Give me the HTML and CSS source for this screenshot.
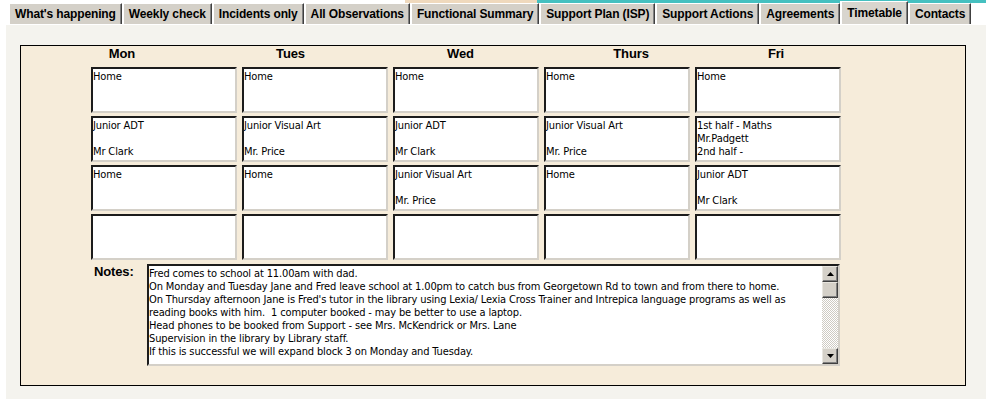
FILE: index.html
```html
<!DOCTYPE html>
<html lang="en">
<head>
  <meta charset="UTF-8" />
  <title>Timetable</title>
  <link rel="stylesheet" href="styles.css">
</head>
<body>

  <div class="tabbar">
    <div class="tab">What's happening</div>
    <div class="tab">Weekly check</div>
    <div class="tab">Incidents only</div>
    <div class="tab">All Observations</div>
    <div class="tab">Functional Summary</div>
    <div class="tab">Support Plan (ISP)</div>
    <div class="tab">Support Actions</div>
    <div class="tab">Agreements</div>
    <div class="tab active">Timetable</div>
    <div class="tab">Contacts</div>
  </div>

  <div class="content">
    <div class="panel">
      <div class="days">
        <div>Mon</div><div>Tues</div><div>Wed</div><div>Thurs</div><div>Fri</div>
      </div>

      <div class="grid">
        <div class="cell">Home</div>
        <div class="cell">Home</div>
        <div class="cell">Home</div>
        <div class="cell">Home</div>
        <div class="cell">Home</div>

        <div class="cell">Junior ADT<br><br>Mr Clark</div>
        <div class="cell">Junior Visual Art<br><br>Mr. Price</div>
        <div class="cell">Junior ADT<br><br>Mr Clark</div>
        <div class="cell">Junior Visual Art<br><br>Mr. Price</div>
        <div class="cell">1st half - Maths<br>Mr.Padgett<br>2nd half -</div>

        <div class="cell">Home</div>
        <div class="cell">Home</div>
        <div class="cell">Junior Visual Art<br><br>Mr. Price</div>
        <div class="cell">Home</div>
        <div class="cell">Junior ADT<br><br>Mr Clark</div>

        <div class="cell"></div>
        <div class="cell"></div>
        <div class="cell"></div>
        <div class="cell"></div>
        <div class="cell"></div>
      </div>

      <div class="notes-row">
        <div class="notes-label">Notes:</div>
        <div class="notes">
          <div class="notes-text">Fred comes to school at 11.00am with dad.<br>On Monday and Tuesday Jane and Fred leave school at 1.00pm to catch bus from Georgetown Rd to town and from there to home.<br>On Thursday afternoon Jane is Fred's tutor in the library using Lexia/ Lexia Cross Trainer and Intrepica language programs as well as<br>reading books with him.&nbsp; 1 computer booked - may be better to use a laptop.<br>Head phones to be booked from Support - see Mrs. McKendrick or Mrs. Lane<br>Supervision in the library by Library staff.<br>If this is successful we will expand block 3 on Monday and Tuesday.</div>
          <div class="scroll">
            <div class="sb-btn"><svg width="7" height="4"><polygon points="0,4 3.5,0 7,4" /></svg></div>
            <div class="sb-btn"></div>
            <div class="sb-track"></div>
            <div class="sb-btn"><svg width="7" height="4"><polygon points="0,0 7,0 3.5,4" /></svg></div>
          </div>
        </div>
      </div>
    </div>
  </div>

</body>
</html>
```

FILE: styles.css
```css
body {
  margin: 0;
  background: #fff;
  font-family: Tahoma, "DejaVu Sans Condensed", "Liberation Sans", sans-serif;
  font-size: 11px;
  letter-spacing: -0.13px;
  color: #000;
}

/* tab strip */
.tabbar {
  display: flex;
  align-items: flex-end;
  height: 24px;
  padding-left: 8px;
  background: linear-gradient(to right, #fff 405px, #efd9bd 405px, #efd9bd 537px, #45c0c0 537px) top left / 100% 3px no-repeat;
}
.tab {
  height: 17px;
  padding: 3px 5px 0 5px;
  line-height: 21px;
  background: #d4d0c8;
  border-top: 1px solid #fff;
  border-left: 2px solid #fff;
  border-right: 1px solid #404040;
  box-shadow: inset -1px 0 #808080;
  font: bold 12px "Liberation Sans", Arial, sans-serif;
  letter-spacing: -0.13px;
  white-space: nowrap;
}
.tab.active {
  height: 20px;
  padding-top: 2px;
  line-height: 19px;
  background: #d8d5ce;
}

/* page body */
.content {
  margin-left: 5px;
  height: 372px;
  padding: 20px 0 0 14px;
  background: #f4f3ee;
  border-top: 1px solid #fff;
  border-left: 1px solid #fff;
  border-bottom: 1px solid #a0a0a0;
}
.panel {
  width: 944px;
  height: 339px;
  background: #f6ecda;
  border: 1px solid #000;
}
.days {
  display: grid;
  grid-template-columns: 168px 169px 171px 170px 120px;
  height: 21px;
  margin-left: 17px;
  font: bold 13px "Liberation Sans", Arial, sans-serif;
  line-height: 15px;
  text-align: center;
}
.grid {
  display: grid;
  grid-template-columns: repeat(5, 146px);
  grid-template-rows: repeat(4, 46px);
  column-gap: 5px;
  row-gap: 3px;
  margin-left: 70px;
}
.cell, .notes {
  box-sizing: border-box;
  background: #fff;
  border: 2px solid;
  border-color: #1c1c1c #d4d0c8 #d4d0c8 #1c1c1c;
}
.cell {
  padding-top: 1px;
  line-height: 13px;
  overflow: hidden;
  white-space: nowrap;
}

/* notes */
.notes-row {
  display: flex;
  margin: 4px 0 0 73px;
}
.notes-label {
  width: 53px;
  font: bold 13px "Liberation Sans", Arial, sans-serif;
  line-height: 15px;
}
.notes {
  display: flex;
  width: 693px;
  height: 102px;
}
.notes-text {
  flex: 1;
  padding-top: 1px;
  line-height: 13px;
  white-space: nowrap;
  overflow: hidden;
}
.scroll {
  display: flex;
  flex-direction: column;
  width: 16px;
}
.sb-btn {
  display: flex;
  align-items: center;
  justify-content: center;
  height: 16px;
  box-sizing: border-box;
  background: #d4d0c8;
  border: 1px solid;
  border-color: #e8e6e0 #404040 #404040 #e8e6e0;
  box-shadow: inset -1px -1px #808080;
}
.sb-track {
  flex: 1;
  background: repeating-conic-gradient(#fff 0 25%, #cfcbc3 0 50%) 0 0 / 2px 2px;
}
```
